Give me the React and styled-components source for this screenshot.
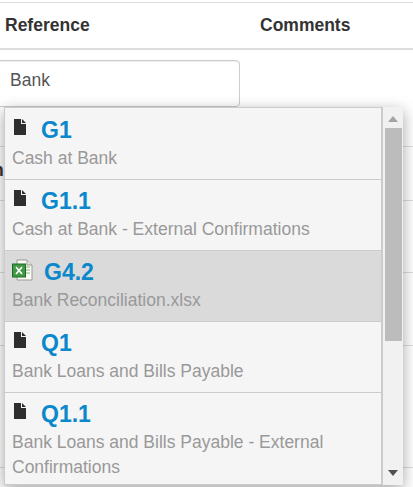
import styled, { createGlobalStyle } from 'styled-components';

const Global = createGlobalStyle`
  html, body {
    margin: 0;
    padding: 0;
    background: #fff;
    overflow: hidden;
  }
  body {
    font-family: "Liberation Sans", Arial, sans-serif;
  }
`;

const Page = styled.div`
  position: relative;
  width: 413px;
  height: 487px;
  overflow: hidden;
`;

const HeaderRow = styled.div`
  display: flex;
  height: 45px;
  margin-top: 2px;
  border-top: 1px solid #ddd;
  border-bottom: 2px solid #ddd;
  align-items: center;
  padding-left: 5px;
  font-size: 17.5px;
  font-weight: 700;
  color: #333;
`;

const ReferenceHead = styled.div`
  width: 255px;
`;

const InputRow = styled.div`
  height: 97px;
  border-bottom: 1px solid #ddd;
  padding-top: 10px;
  box-sizing: border-box;
`;

const SearchInput = styled.div`
  box-sizing: border-box;
  width: 248px;
  height: 47px;
  margin-left: -8px;
  padding: 0 17px 6px;
  display: flex;
  align-items: center;
  background: #fff;
  border: 1px solid #ccc;
  border-radius: 4px;
  font-size: 17.5px;
  color: #555;
  box-shadow: inset 0 1px 1px rgba(0, 0, 0, 0.075);
`;

const BackRow = styled.div`
  height: ${p => p.$h}px;
  border-bottom: 1px solid #ddd;
  box-sizing: border-box;
`;

const BackCell = styled.div`
  margin-left: -7px;
  padding-top: 13px;
  font-size: 17.5px;
  font-weight: 700;
  line-height: 20px;
  color: #333;
`;

const Menu = styled.div`
  position: absolute;
  left: 4px;
  top: 107px;
  width: 399px;
  height: 378px;
  box-sizing: border-box;
  display: flex;
  background: #f5f5f5;
  box-shadow: 0 4px 14px rgba(0, 0, 0, 0.36);
`;

const List = styled.div`
  flex: 1;
  min-width: 0;
  padding-top: 1px;
  border: 1px solid #ccc;
  overflow: hidden;
`;

const Item = styled.div`
  box-sizing: border-box;
  height: 71px;
  padding: 7px 0 0 7px;
  background: ${p => (p.$active ? '#dadada' : '#f5f5f5')};
  border-bottom: 1px solid #ccc;
  &:last-child {
    height: auto;
    border-bottom: 0;
  }
`;

const TitleLine = styled.div`
  display: flex;
  align-items: flex-start;
  height: 30px;
`;

const Title = styled.span`
  font-size: 23px;
  line-height: 28px;
  font-weight: 700;
  color: #0b87cc;
  margin-left: ${p => p.$offset}px;
`;

const Subtitle = styled.div`
  font-size: 17.5px;
  line-height: 25px;
  color: #999;
`;

const Scrollbar = styled.div`
  width: 21px;
  flex: none;
  display: flex;
  flex-direction: column;
  align-items: center;
  background: #f1f1f1;
  border-left: 1px solid #ccc;
  box-sizing: border-box;
`;

const Arrow = styled.svg`
  display: block;
  flex: none;
  width: 10px;
  height: 6px;
  margin: ${p => p.$margin};
`;

const Thumb = styled.div`
  width: 17px;
  height: 213px;
  background: #bcbcbc;
  flex: none;
`;

const Track = styled.div`
  flex: 1;
`;

const FileSvg = styled.svg`
  flex: none;
  margin: 3px 0 0 2px;
`;

const ExcelSvg = styled.svg`
  flex: none;
  margin-top: 1px;
`;

const FileIcon = () => (
  <FileSvg width="12" height="16" viewBox="0 0 12 16">
    <path d="M0 0h7v5h5v11H0z M8 0l4 4H8z" fill="#2e2e2e" />
  </FileSvg>
);

const ExcelIcon = () => (
  <ExcelSvg width="22" height="22" viewBox="0 0 22 22">
    <path d="M5 1h10l5 5v15H5z" fill="#fbfbf6" stroke="#9a9a92" />
    <path d="M15 1v5h5" fill="#e4e4dc" stroke="#9a9a92" />
    <rect x="0.5" y="5" width="13" height="13" fill="#3f9a43" stroke="#1d6a28" />
    <path d="M4 8l6 7M10 8l-6 7" stroke="#fff" strokeWidth="1.7" />
    <path d="M14 8h4M14 11h4M14 14h4" stroke="#7cba7e" />
  </ExcelSvg>
);

const rows = [
  { id: 'G1', text: 'Cash at Bank' },
  { id: 'G1.1', text: 'Cash at Bank - External Confirmations' },
  { id: 'G4.2', text: 'Bank Reconciliation.xlsx', excel: true },
  { id: 'Q1', text: 'Bank Loans and Bills Payable' },
  { id: 'Q1.1', text: 'Bank Loans and Bills Payable - External Confirmations' },
];

export default function App() {
  return (
    <Page>
      <Global />
      <HeaderRow>
        <ReferenceHead>Reference</ReferenceHead>
        <div>Comments</div>
      </HeaderRow>
      <InputRow>
        <SearchInput>Bank</SearchInput>
      </InputRow>
      <BackRow $h={54}>
        <BackCell>n</BackCell>
      </BackRow>
      <BackRow $h={72} />
      <BackRow $h={73} />
      <BackRow $h={122} />
      <Menu>
        <List>
          {rows.map(row => (
            <Item key={row.id} $active={row.excel}>
              <TitleLine>
                {row.excel ? <ExcelIcon /> : <FileIcon />}
                <Title $offset={row.excel ? 10 : 15}>{row.id}</Title>
              </TitleLine>
              <Subtitle>{row.text}</Subtitle>
            </Item>
          ))}
        </List>
        <Scrollbar>
          <Arrow viewBox="0 0 10 6" $margin="9px 0 6px">
            <path d="M5 0l5 6H0z" fill="#a3a3a3" />
          </Arrow>
          <Thumb />
          <Track />
          <Arrow viewBox="0 0 10 6" $margin="0 0 9px">
            <path d="M0 0h10L5 6z" fill="#505050" />
          </Arrow>
        </Scrollbar>
      </Menu>
    </Page>
  );
}
